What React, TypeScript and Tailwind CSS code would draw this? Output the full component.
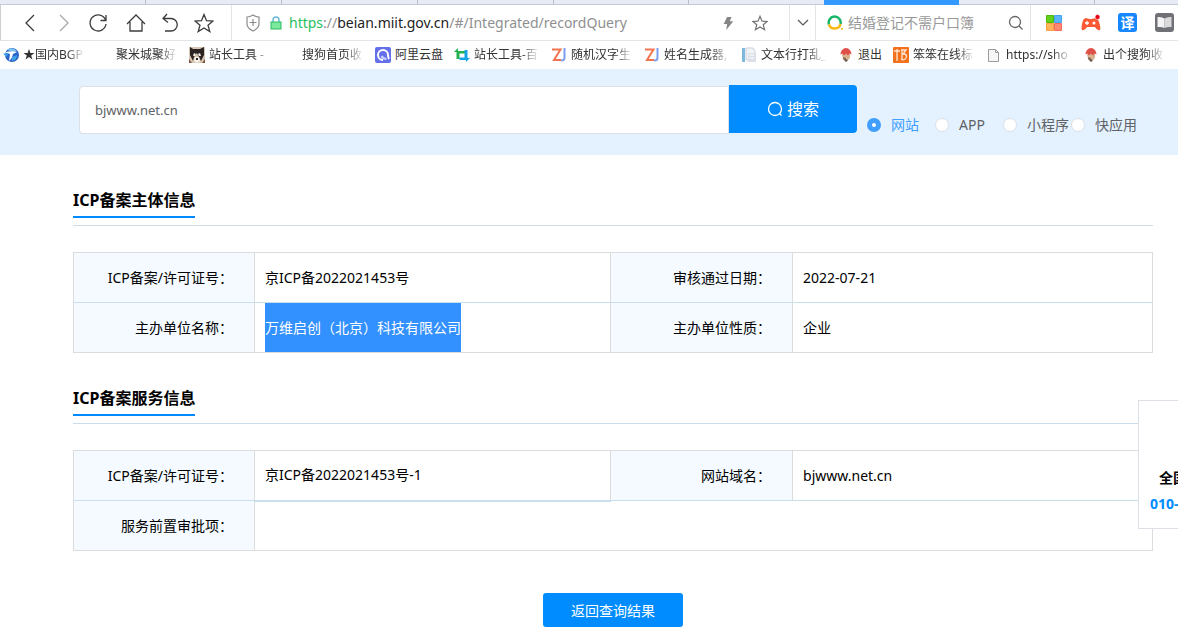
import { useState } from "react"
import type { ReactNode } from "react"
import clsx from "clsx"

interface Bookmark {
  title: string
  icon: ReactNode
  width: string
}

interface Cell {
  label: string
  value: string
  selected?: boolean
  thick?: boolean
}

const NARROW = "w-[62px]"
const WIDE = "w-[66px]"

const zFavicon = (
  <svg viewBox="0 0 16 16" className="h-4 w-4 shrink-0" fill="none" strokeWidth="2">
    <path d="M1 2.500h8.500L3 13h7" stroke="#f2744f" />
    <path d="M13.500 1v10q0 2.500-3.500 2.500" stroke="#7d9ff0" />
  </svg>
)

const pencilFavicon = (
  <svg viewBox="0 0 16 16" className="h-4 w-4 shrink-0">
    <path d="M4 7l4-2 4 2v4l-4 4-3-3z" fill="#d9b48f" />
    <path d="M5 10l3 1v4l-3-3z" fill="#8a6a5a" />
    <path d="M8 1c3 0 5.500 3 5.500 6.500l-2-1-1.500 2-2-2-2 2-1.500-2-2 1C2.500 4 5 1 8 1z" fill="#e0504a" />
    <path d="M7 12l1 3 2-2z" fill="#555" />
  </svg>
)

const blankFavicon = <span className="h-4 w-4 shrink-0" />

const bookmarks: Bookmark[] = [
  {
    title: "★国内BGP",
    width: NARROW,
    icon: (
      <svg viewBox="0 0 16 16" className="h-4 w-4 shrink-0">
        <circle cx="9" cy="8" r="7" fill="#2a64c5" />
        <path d="M4 3q5-4 10 1l-3 1z" fill="#7cc4f2" />
        <path d="M2 5.500q6-2 12-.5l-4 2q-1 5-4 7l1-7z" fill="#fff" />
        <path d="M0 6.500h5.500L3 10zM9 10l5-2q0 5-5 6z" fill="#3fa3e8" />
      </svg>
    ),
  },
  { title: "聚米城聚好", width: NARROW, icon: blankFavicon },
  {
    title: "站长工具 -",
    width: NARROW,
    icon: (
      <svg viewBox="0 0 16 16" className="h-4 w-4 shrink-0">
        <path d="M0 0h16v16H0z" fill="#d8c6b4" />
        <path d="M1 0l3 2h7l4-2v8l-3 6-2-4-2-4-3 4-1 4-3-6z" fill="#2b2422" />
        <path d="M5 6l2 1-1 2H4zM11 6L9 7l1 2h2zM6 10h4l1 4-3 2-3-2z" fill="#f6f0ea" />
        <path d="M7 11h2v2H7z" fill="#2b2422" />
        <path d="M0 12l3 4H0zM16 12l-3 4h3z" fill="#7d5440" />
      </svg>
    ),
  },
  { title: "搜狗首页收", width: NARROW, icon: blankFavicon },
  {
    title: "阿里云盘",
    width: "w-12",
    icon: (
      <svg viewBox="0 0 16 16" className="h-4 w-4 shrink-0">
        <rect width="16" height="16" rx="2" fill="#6470ea" />
        <path d="M8 13A5 5 0 1 1 13 8q0 2 1 4" fill="none" stroke="#fff" strokeWidth="2" />
        <path d="M6.500 9q1.500 3 5 3" fill="none" stroke="#cfd4ff" strokeWidth="2" />
      </svg>
    ),
  },
  {
    title: "站长工具-百",
    width: WIDE,
    icon: (
      <svg viewBox="0 0 16 16" className="h-4 w-4 shrink-0">
        <path d="M0 5l4-4v3h7v2.500H5.500V12H2.500V5z" fill="#23b14d" />
        <path d="M5.500 10.500h5V3h3v8H16l-4 4v-2H5.500z" fill="#13a3e6" />
      </svg>
    ),
  },
  { title: "随机汉字生", width: NARROW, icon: zFavicon },
  { title: "姓名生成器,", width: WIDE, icon: zFavicon },
  {
    title: "文本行打乱_",
    width: WIDE,
    icon: (
      <svg viewBox="0 0 16 16" className="h-4 w-4 shrink-0">
        <path d="M1 1h3v14H1z" fill="#7eb8dc" />
        <path d="M5 1h7l2 3v9H5z" fill="#f1f3f6" stroke="#c9d0d9" />
        <path d="M7 6h8v9H7z" fill="#dbe0e8" />
        <path d="M8 8h5M8 11h5" stroke="#fff" />
      </svg>
    ),
  },
  { title: "退出", width: "w-6", icon: pencilFavicon },
  {
    title: "笨笨在线标",
    width: NARROW,
    icon: (
      <svg viewBox="0 0 16 16" className="h-4 w-4 shrink-0">
        <rect width="16" height="16" rx="1" fill="#f3701d" />
        <path d="M1 4h6M4 2v12M8 3h5l-3 4q5 0 3 4-2 3-5 1M9 3v9" fill="none" stroke="#ffe9d4" strokeWidth="1.300" />
      </svg>
    ),
  },
  {
    title: "https://sho",
    width: WIDE,
    icon: (
      <svg viewBox="0 0 16 16" className="h-4 w-4 shrink-0" fill="#f7f7f7" stroke="#9b9b9b">
        <path d="M2.500 2.500h7l3 3v9h-10zM9.500 2.500v3h3" />
      </svg>
    ),
  },
  { title: "出个搜狗收", width: NARROW, icon: pencilFavicon },
]

const subjectRows: Cell[][] = [
  [
    { label: "ICP备案/许可证号：", value: "京ICP备2022021453号" },
    { label: "审核通过日期：", value: "2022-07-21" },
  ],
  [
    { label: "主办单位名称：", value: "万维启创（北京）科技有限公司", selected: true },
    { label: "主办单位性质：", value: "企业" },
  ],
]

const serviceRows: Cell[][] = [
  [
    { label: "ICP备案/许可证号：", value: "京ICP备2022021453号-1", thick: true },
    { label: "网站域名：", value: "bjwww.net.cn" },
  ],
  [{ label: "服务前置审批项：", value: "" }],
]

const searchTypes = ["网站", "APP", "小程序", "快应用"]

function NavButton({ label, dim, children }: { label: string; dim?: boolean; children: ReactNode }) {
  return (
    <button
      type="button"
      aria-label={label}
      className={clsx("flex h-full w-[34px] items-center justify-center", dim ? "text-[#a9a9a9]" : "text-[#3c3c3c]")}
    >
      <svg viewBox="0 0 20 20" className="h-5 w-5" fill="none" stroke="currentColor" strokeWidth="1.3">
        {children}
      </svg>
    </button>
  )
}

function TabStrip() {
  return (
    <div className="flex h-[5px] border-b border-[#c5cad8] bg-[#e7ebf4]">
      <div className="w-[146px] border-r border-[#b9bfce]" />
      <div className="flex-1 border-r border-[#b9bfce]" />
      <div className="flex-1 border-r border-[#b9bfce]" />
      <div className="flex-1 border-r border-[#b9bfce]" />
      <div className="flex-1 border-r border-[#b9bfce]" />
      <div className="flex-1" />
      <div className="h-[5px] flex-1 bg-[#3399ff]" />
      <div className="flex-1 border-r border-[#b9bfce]" />
      <div className="w-[83px]" />
    </div>
  )
}

function Toolbar() {
  return (
    <div className="flex h-9 items-center border-b border-l border-b-[#e2e4e8] border-l-[#cfcfcf] bg-white">
      <div className="flex h-full shrink-0 gap-1 border-r border-[#e2e4e8] pr-[10px] pl-3">
        <div className="flex">
          <NavButton label="后退"><path d="M14 2L6 10l8 8" /></NavButton>
          <NavButton label="前进" dim><path d="M6 2l8 8-8 8" /></NavButton>
          <NavButton label="刷新"><path d="M17.500 7A8 8 0 1 0 18 11M18 2v5.500h-5.500" /></NavButton>
        </div>
        <div className="flex">
          <NavButton label="主页"><path d="M1 11l9-9 9 9M4 9v9h12V9" /></NavButton>
          <NavButton label="恢复"><path d="M7 1L3 5.500l5 4M3 5.500h8a6 6 0 0 1 0 12.500H5" /></NavButton>
          <NavButton label="收藏夹"><path d="M10 1.500l2.500 6.200 6.500.3-5 4.200 1.800 6.300L10 15l-5.800 3.500L6 12.200 1 8l6.500-.3z" /></NavButton>
        </div>
      </div>

      <div className="flex h-full min-w-0 flex-1 items-center pl-[13px]">
        <svg viewBox="0 0 16 18" className="h-[18px] w-4 shrink-0" fill="none" stroke="#8b8b8b" strokeWidth="1.200">
          <path d="M8 1q3 2 6 2v7q0 4-6 7-6-3-6-7V3q3 0 6-2zM8 5v7M4.500 8.500h7" />
        </svg>
        <svg viewBox="0 0 12 14" className="mr-[7px] ml-[9px] h-[14px] w-3 shrink-0">
          <path d="M3 6V4a3 3 0 0 1 6 0v2" fill="none" stroke="#6cb9d8" strokeWidth="1.500" />
          <rect x="1" y="6" width="10" height="7" fill="#7be89c" stroke="#2dba63" />
        </svg>
        <div className="min-w-0 flex-1 truncate text-[14px] leading-5 text-[#8f8f8f]">
          <span className="text-[#1fc05c]">https</span>://<span className="text-[#222]">beian.miit.gov.cn</span>/#/Integrated/recordQuery
        </div>
        <svg viewBox="0 0 12 16" className="mr-[18px] h-[14px] w-3 shrink-0" fill="#858585">
          <path d="M5 1h5L8 6h4L4 16l1-7H1z" />
        </svg>
        <svg viewBox="0 0 20 20" className="mr-[21px] h-4 w-4 shrink-0" fill="none" stroke="#6e6e6e" strokeWidth="1.400">
          <path d="M10 1.500l2.500 6.200 6.500.3-5 4.200 1.800 6.300L10 15l-5.800 3.500L6 12.200 1 8l6.500-.3z" />
        </svg>
      </div>

      <button type="button" aria-label="展开" className="flex h-full w-[27px] shrink-0 items-center justify-center border-x border-[#e2e4e8]">
        <svg viewBox="0 0 12 8" className="h-2 w-3" fill="none" stroke="#555" strokeWidth="1.200"><path d="M1 1l5 5 5-5" /></svg>
      </button>

      <div className="flex h-full w-[215px] shrink-0 items-center gap-1 border-r border-[#e2e4e8] pr-[6px] pl-[11px]">
        <svg viewBox="0 0 17 16" className="h-4 w-[17px] shrink-0" fill="none" strokeWidth="2.500">
          <path d="M2 9.500A6 6 0 1 1 13.500 9" stroke="#1bb768" />
          <path d="M2 9.500A6 6 0 0 0 13.500 9" stroke="#f9b716" />
          <path d="M14 13h2v1.500h-2z" fill="#f9b716" stroke="none" />
        </svg>
        <input aria-label="搜索引擎" placeholder="结婚登记不需户口簿" className="min-w-0 flex-1 text-[14px] outline-none placeholder:text-[#999]" />
        <svg viewBox="0 0 16 16" className="h-4 w-4 shrink-0" fill="none" stroke="#666" strokeWidth="1.300">
          <circle cx="7" cy="7" r="5.500" /><path d="M11 11l3.500 3.500" />
        </svg>
      </div>

      <div className="flex h-full w-[147px] shrink-0 items-center pl-[15px]">
        <svg viewBox="0 0 16 16" className="h-4 w-4">
          <path d="M.5.5h7v7h-7z" fill="#62d11b" stroke="#4cb80c" /><path d="M8.500.5h7v7h-7z" fill="#5bb5fa" stroke="#47a2ee" />
          <path d="M.5 8.500h7v7h-7z" fill="#ffb45c" stroke="#f79f3f" /><path d="M8.500 8.500h7v7h-7z" fill="#ff8873" stroke="#f56c58" />
        </svg>
        <svg viewBox="0 0 20 18" className="ml-[19px] h-[18px] w-5">
          <path d="M5 4q5 2 9 0 3 0 4 4 2 6 1 8-3 1-5-3H6q-2 4-5 3-1-2 0-6 1-6 4-6z" fill="#f95a34" />
          <path d="M6 7v4M4 9h4" stroke="#fff" strokeWidth="1.300" />
          <circle cx="13" cy="9" r="1.500" fill="#fff" />
          <circle cx="16.500" cy="3" r="2.500" fill="#e60012" stroke="#fff" strokeWidth=".6" />
        </svg>
        <span className="ml-[17px] flex h-[19px] w-[19px] items-center justify-center rounded-[3px] bg-[#1687ff] text-[14px] leading-none font-bold text-white">译</span>
        <svg viewBox="0 0 19 19" className="ml-[18px] h-[19px] w-[19px]">
          <rect width="19" height="19" rx="3" fill="#6f7176" />
          <path d="M2.500 4q4-.5 7 1.500v9.500q-3-1.500-7-1z" fill="#f4f4f4" />
          <path d="M16.500 4q-4-.5-7 1.500v9.500q3-1.500 7-1z" fill="#dadada" />
        </svg>
      </div>
    </div>
  )
}

function BookmarkBar() {
  return (
    <nav className="flex h-7 items-center gap-[11px] bg-white pl-[3px]">
      {bookmarks.map((b) => (
        <a key={b.title} href="#" className="flex shrink-0 items-center gap-1 text-[12px] leading-4 text-[#333]">
          {b.icon}
          <span className={clsx("whitespace-nowrap", b.width, b.width.includes("[") && "[mask-image:linear-gradient(to_right,#000_70%,transparent)]")}>
            {b.title}
          </span>
        </a>
      ))}
    </nav>
  )
}

function SearchBand() {
  const [type, setType] = useState(searchTypes[0])

  return (
    <form className="flex h-[86px] items-start bg-[#e4f2ff] pt-4 pr-[39px] pl-[79px]" onSubmit={(e) => e.preventDefault()}>
      <input
        aria-label="查询内容"
        defaultValue="bjwww.net.cn"
        className="mt-px h-12 min-w-0 flex-1 rounded-l border border-[#dcdfe6] bg-white px-[15px] text-[13px] text-[#606266] outline-none"
      />
      <button type="submit" className="flex h-12 w-32 shrink-0 items-center justify-center gap-1 rounded-r bg-[#008cff] text-[16px] text-white">
        <svg viewBox="0 0 16 16" className="h-4 w-4" fill="none" stroke="currentColor" strokeWidth="1.300">
          <circle cx="8" cy="8" r="6.500" /><path d="M12.500 12.500l2 2" />
        </svg>
        搜索
      </button>
      <div className="ml-[10px] flex shrink-0 pt-[30px]">
        {searchTypes.map((t) => (
          <label
            key={t}
            className={clsx("flex w-[68px] items-center gap-[10px] text-[14px] leading-5 whitespace-nowrap", t === type ? "text-[#409eff]" : "text-[#606266]")}
          >
            <input
              type="radio"
              name="searchType"
              checked={t === type}
              onChange={() => setType(t)}
              className="h-[14px] w-[14px] shrink-0 appearance-none rounded-full border border-[#dcdfe6] bg-white checked:border-[5px] checked:border-[#409eff]"
            />
            {t}
          </label>
        ))}
      </div>
    </form>
  )
}

function InfoSection({ title, rows }: { title: string; rows: Cell[][] }) {
  return (
    <section className="pt-[33px]">
      <div className="mb-[26px] flex border-b border-[#cbddea] pb-[7px]">
        <h2 className="border-b-2 border-[#008cff] pb-1 text-[16px] leading-6 font-bold">{title}</h2>
      </div>
      <table className="w-full table-fixed border-collapse border border-[#dadcde] text-[14px] leading-5">
        <colgroup>
          <col className="w-[181px]" />
          <col className="w-[33%]" />
          <col className="w-[182px]" />
          <col />
        </colgroup>
        <tbody>
          {rows.map((row) => (
            <tr key={row[0].label} className="h-[50px] border-b border-[#c8dfee] last:border-[#dadcde]">
              {row.map((cell) => [
                <th key={cell.label} scope="row" className="border-x border-[#dadcde] bg-[#f4faff] p-0 pr-[21px] text-right font-normal">
                  {cell.label}
                </th>,
                <td
                  key={cell.label + "value"}
                  colSpan={row.length === 1 ? 3 : 1}
                  className={clsx("border-x border-x-[#dadcde] p-0 pl-[10px]", cell.thick && "border-b-2 border-b-[#c8dfee]")}
                >
                  {cell.selected ? (
                    <span className="block w-fit bg-[#3390ff] leading-[49px] text-white">{cell.value}</span>
                  ) : (
                    cell.value
                  )}
                </td>,
              ])}
            </tr>
          ))}
        </tbody>
      </table>
    </section>
  )
}

export default function App() {
  return (
    <div className="min-h-screen overflow-x-hidden bg-white font-['Noto_Sans','Noto_Sans_CJK_SC',sans-serif] text-black">
      <header>
        <TabStrip />
        <Toolbar />
        <BookmarkBar />
      </header>

      <SearchBand />

      <main className="pr-[25px] pl-[73px]">
        <InfoSection title="ICP备案主体信息" rows={subjectRows} />
        <InfoSection title="ICP备案服务信息" rows={serviceRows} />
        <div className="flex justify-center pt-[42px] pb-[10px]">
          <button type="button" className="h-[34px] w-[140px] rounded-[3px] bg-[#008cff] text-[14px] text-white">
            返回查询结果
          </button>
        </div>
      </main>

      {/* hotline card, mostly hidden past the right edge */}
      <aside className="fixed top-[400px] right-0 h-[129px] w-10 overflow-hidden border border-r-0 border-[#dcdfe6] bg-white pt-[64px] text-[14px] leading-[26px] font-bold whitespace-nowrap">
        <p className="pl-5">全国</p>
        <p className="pl-[11px] text-[#008cff]">010-</p>
      </aside>
    </div>
  )
}
